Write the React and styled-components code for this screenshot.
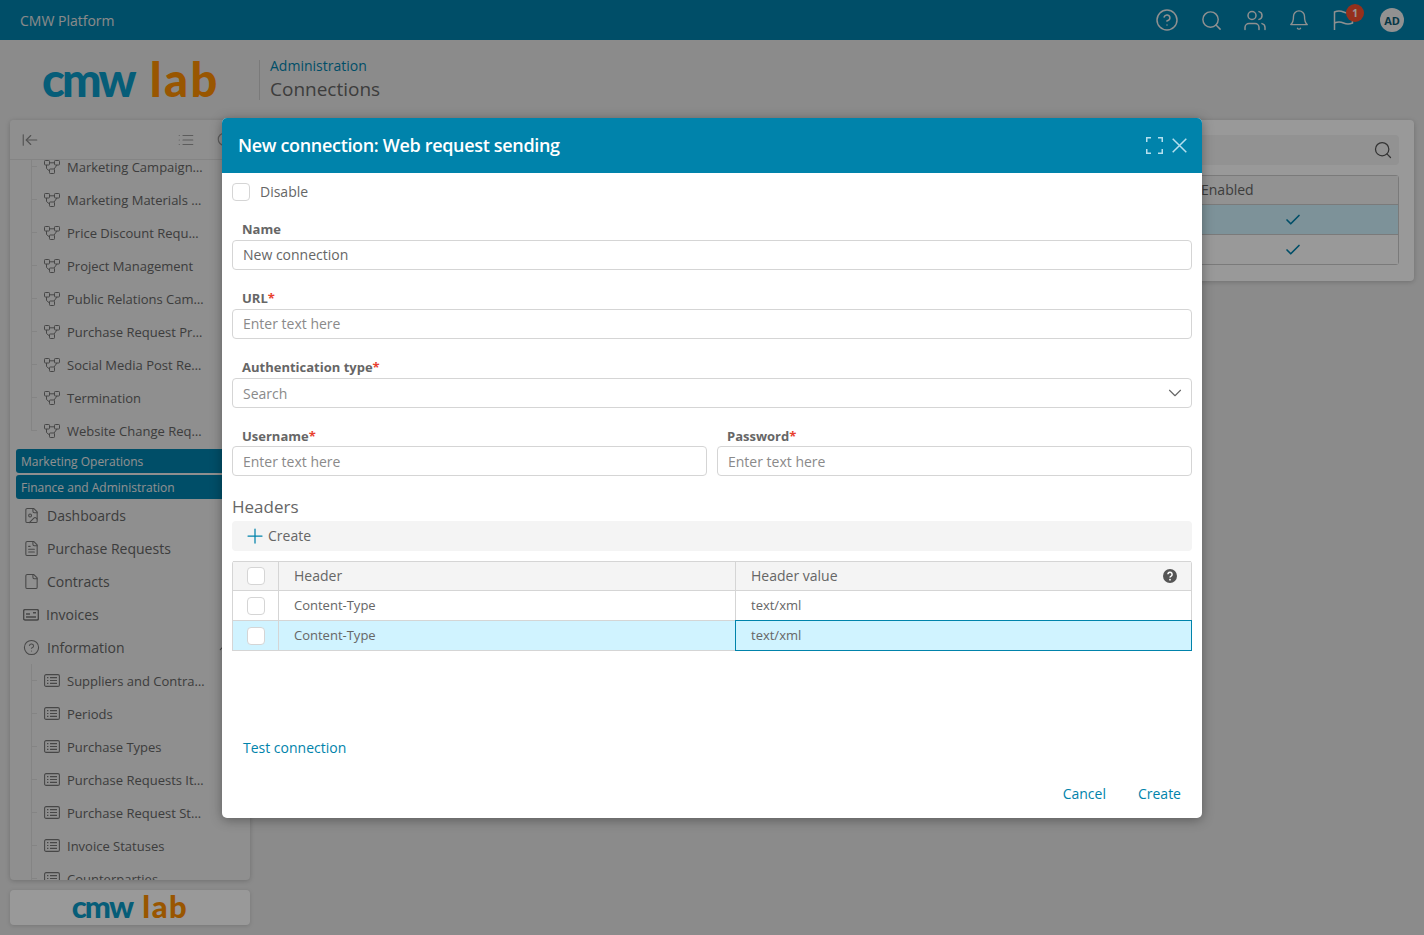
import React from 'react';
import styled, { createGlobalStyle } from 'styled-components';
import {
  LuCircleHelp, LuSearch, LuUsers, LuBell, LuCheck, LuChevronDown, LuChevronUp, LuPlus,
  LuFileImage, LuFileText, LuFile, LuList, LuArrowLeftToLine,
} from 'react-icons/lu';

const GlobalStyle = createGlobalStyle`
  html, body {
    margin: 0;
    height: 100%;
    overflow: hidden;
    font-family: "Open Sans", "Liberation Sans", sans-serif;
    color: #555;
  }
  * { box-sizing: border-box; }
`;

const Page = styled.div`
  position: relative;
  width: 1424px;
  height: 935px;
  overflow: hidden;
  background: #e8e8e8;
`;

const TopBar = styled.header`
  height: 40px;
  background: #0083ae;
  display: flex;
  align-items: center;
  justify-content: space-between;
  padding: 0 20px;
  color: #fff;
`;

const Brand = styled.div`
  font-size: 14px;
  color: #e6e6e6;
`;

const TopIcons = styled.div`
  display: flex;
  align-items: center;
  gap: 20px;
  color: #f0f0f0;
  font-size: 22px;

  svg {
    stroke-width: 1.5;
  }
`;

const IconSlot = styled.span`
  position: relative;
  width: 24px;
  height: 24px;
  display: flex;
  align-items: center;
  justify-content: center;
`;

const Badge = styled.span`
  position: absolute;
  top: -4px;
  right: -9px;
  width: 18px;
  height: 18px;
  border-radius: 50%;
  background: #f9502f;
  color: #fff;
  font-size: 10px;
  font-weight: 700;
  display: flex;
  align-items: center;
  justify-content: center;
`;

const Avatar = styled.span`
  width: 24px;
  height: 24px;
  margin-left: 5px;
  border-radius: 50%;
  background: #f2f2f2;
  color: #0a5a74;
  font-size: 11px;
  font-weight: 700;
  display: flex;
  align-items: center;
  justify-content: center;
`;

const PageHead = styled.div`
  height: 80px;
  display: flex;
  align-items: center;
  padding-left: 42px;
`;

const Logo = styled.div`
  display: flex;
  align-items: baseline;
  gap: ${p => (p.$small ? '10px' : '16px')};
  margin-top: -2px;
  font-family: Lato, "Open Sans", sans-serif;
  font-weight: 900;
  font-size: ${p => (p.$small ? '31px' : '47px')};
  line-height: 1;
  width: ${p => (p.$small ? 'auto' : '217px')};
`;

const LogoCmw = styled.span`
  color: #0a9cc8;
  letter-spacing: -0.06em;
`;

const LogoLab = styled.span`
  color: #ff9000;
  letter-spacing: 0.05em;
`;

const Crumbs = styled.div`
  border-left: 1px solid #ccc;
  height: 40px;
  padding-left: 10px;
  display: flex;
  flex-direction: column;
  justify-content: center;
`;

const CrumbParent = styled.div`
  font-size: 14px;
  line-height: 17px;
  margin-bottom: 1px;
  color: #0083ae;
`;

const CrumbTitle = styled.div`
  font-size: 19px;
  line-height: 28px;
  color: #666;
`;

const Content = styled.div`
  display: flex;
  gap: 10px;
  padding: 0 10px;
`;

const Side = styled.div`
  width: 240px;
  flex: none;
  display: flex;
  flex-direction: column;
  gap: 10px;
`;

const SidePanel = styled.nav`
  height: 760px;
  background: #eee;
  border-radius: 4px;
  overflow: hidden;
  isolation: isolate;
  box-shadow: 0 1px 5px rgba(0, 0, 0, 0.2);
  display: flex;
  flex-direction: column;
`;

const SideTools = styled.div`
  height: 40px;
  flex: none;
  display: flex;
  align-items: center;
  justify-content: space-between;
  padding: 0 16px 0 11px;
  border-bottom: 1px solid #ddd;
  color: #888;
  font-size: 18px;
  position: relative;
  z-index: 1;
  background: #eee;

  svg {
    stroke-width: 1.5;
  }
`;

const SideToolGroup = styled.div`
  display: flex;
  align-items: center;
  gap: 21px;
  color: #999;
`;

const SideList = styled.div`
  margin-top: -10px;
  padding: 0 6px;
`;

const TreeItem = styled.div`
  position: relative;
  height: 33px;
  display: flex;
  align-items: center;
  gap: 7px;
  padding-left: 28px;
  color: #666;
  font-size: 13px;
  white-space: nowrap;

  &::before {
    content: '';
    position: absolute;
    left: 15px;
    top: 0;
    bottom: ${p => (p.$last ? '16px' : '0')};
    width: 1px;
    background: #ddd;
  }

  &::after {
    content: '';
    position: absolute;
    left: 15px;
    top: 16px;
    width: 6px;
    height: 1px;
    background: #ddd;
  }

  svg {
    flex: none;
    color: #777;
  }
`;

const Sections = styled.div`
  display: flex;
  flex-direction: column;
  gap: 2px;
  margin-top: 2px;
`;

const SectionHead = styled.div`
  height: 24px;
  background: #0083ae;
  border-radius: 3px;
  color: #f0f0f0;
  font-size: 12px;
  display: flex;
  align-items: center;
  justify-content: space-between;
  padding: 0 11px 0 5px;

  svg {
    font-size: 14px;
  }
`;

const SideItem = styled.div`
  height: 33px;
  display: flex;
  align-items: center;
  gap: 7px;
  padding-left: 7px;
  color: #666;
  font-size: 14px;
  white-space: nowrap;

  svg {
    flex: none;
    font-size: 17px;
    color: #777;
    stroke-width: 1.5;
  }
`;

const ItemChevron = styled(LuChevronUp)`
  margin-left: auto;
  margin-right: 11px;
`;

const SideFoot = styled.div`
  height: 35px;
  background: #fff;
  border-radius: 4px;
  box-shadow: 0 1px 4px rgba(0, 0, 0, 0.15);
  display: flex;
  align-items: center;
  justify-content: center;
`;

const MainPanel = styled.section`
  flex: 1;
  min-width: 0;
  height: 161px;
  background: #fff;
  border-radius: 4px;
  box-shadow: 0 1px 5px rgba(0, 0, 0, 0.2);
  padding: 15px;
`;

const MainSearch = styled.div`
  height: 30px;
  background: #f4f4f4;
  border-radius: 4px;
  display: flex;
  align-items: center;
  justify-content: flex-end;
  padding-right: 6px;
  font-size: 20px;
  color: #555;

  svg {
    stroke-width: 1.5;
  }
`;

const MainTable = styled.div`
  margin-top: 10px;
  border: 1px solid #ccc;
  border-radius: 3px;
  font-size: 14px;
`;

const MainRow = styled.div`
  height: ${p => (p.$head ? '28px' : '30px')};
  display: flex;
  align-items: center;
  border-top: ${p => (p.$head ? 'none' : '1px solid #ccc')};
  background: ${p => (p.$active ? '#d0f3ff' : p.$head ? '#f4f4f4' : '#fff')};
`;

const EnabledCell = styled.div`
  margin-left: 925px;
  width: 184px;
  display: flex;
  justify-content: center;
  color: #0083ae;
  font-size: 18px;

  svg {
    stroke-width: 2.25;
  }
`;

const EnabledTitle = styled.div`
  margin: -2px 0 0 925px;
  color: #666;
`;

const Overlay = styled.div`
  position: absolute;
  inset: 0;
  background: rgba(0, 0, 0, 0.4);
`;

const Dialog = styled.div`
  position: absolute;
  left: 222px;
  top: 118px;
  width: 980px;
  height: 700px;
  background: #fff;
  border-radius: 5px;
  box-shadow: 0 2px 12px rgba(0, 0, 0, 0.35);
  display: flex;
  flex-direction: column;
  overflow: hidden;
`;

const DialogHead = styled.div`
  height: 55px;
  flex: none;
  background: #0083ab;
  display: flex;
  align-items: center;
  justify-content: space-between;
  padding: 0 15px 1px 16px;
  color: #fff;
`;

const DialogTitle = styled.div`
  font-size: 18px;
  font-weight: 600;
  letter-spacing: -0.33px;
`;

const DialogTools = styled.div`
  display: flex;
  align-items: center;
  gap: 9px;
  color: #b5dfee;

  svg {
    display: block;
  }
`;

const DialogBody = styled.div`
  flex: 1;
  display: flex;
  flex-direction: column;
  padding: 0 10px;
`;

const DisableRow = styled.label`
  height: 37px;
  margin-bottom: 8px;
  display: flex;
  align-items: center;
  gap: 10px;
  font-size: 14px;
  color: #666;
`;

const Box = styled.span`
  width: 18px;
  height: 18px;
  border: 1px solid #d5d5d5;
  border-radius: 4px;
  background: #fff;
  display: block;
  flex: none;
`;

const Field = styled.div`
  margin-bottom: 17px;
`;

const Label = styled.div`
  height: 22px;
  padding: 2px 0 0 10px;
  font-size: 13px;
  line-height: 18px;
  font-weight: 700;
  color: #666;

  b {
    color: #e8412f;
    font-weight: 700;
  }
`;

const FieldRow = styled.div`
  display: flex;
  gap: 10px;

  ${Field} {
    flex: 1;
  }

  ${Label} {
    height: 21px;
  }
`;

const Input = styled.div`
  height: 30px;
  border: 1px solid #d5d5d5;
  border-radius: 4px;
  display: flex;
  align-items: center;
  justify-content: space-between;
  padding: 0 10px ${p => (p.$raised ? '1px' : '0')};
  font-size: 14px;
  color: ${p => (p.$filled ? '#666' : '#8a8a8a')};

  svg {
    font-size: 22px;
    color: #666;
    stroke-width: 1.25;
    margin-right: -5px;
  }
`;

const SectionTitle = styled.div`
  font-size: 17px;
  line-height: 24px;
  margin-top: 2px;
  color: #666;
`;

const Toolbar = styled.div`
  height: 30px;
  margin-top: 2px;
  background: #f4f4f4;
  border-radius: 4px;
  display: flex;
  align-items: center;
  gap: 1px;
  padding: 0 0 1px 11px;
  font-size: 14px;
  color: #666;

  svg {
    font-size: 24px;
    color: #0083ab;
    stroke-width: 1.25;
  }
`;

const HeaderTable = styled.div`
  margin-top: 10px;
  border-left: 1px solid #d5d5d5;
  border-right: 1px solid #d5d5d5;
  border-radius: 3px 3px 0 0;
`;

const Row = styled.div`
  display: grid;
  grid-template-columns: 46px 457px 1fr;
  height: 30px;
  border-top: ${p => (p.$head ? '1px solid #d5d5d5' : 'none')};
  border-bottom: 1px solid #d5d5d5;
  font-size: ${p => (p.$head ? '14px' : '13px')};
  color: #666;
  background: ${p => (p.$active ? '#d0f3ff' : p.$head ? '#f4f4f4' : '#fff')};
`;

const Cell = styled.div`
  display: flex;
  align-items: center;
  justify-content: ${p => (p.$center ? 'center' : 'space-between')};
  padding: ${p => (p.$center ? '0' : '0 14px 1px 15px')};
  border-right: ${p => (p.$last ? 'none' : '1px solid #d5d5d5')};
  outline: ${p => (p.$focused ? '1px solid #0083ab' : 'none')};
`;

const Spacer = styled.div`
  flex: 1;
`;

const TextLink = styled.a`
  font-size: 14px;
  color: #0083ab;
`;

const TestLink = styled(TextLink)`
  padding-left: 11px;
`;

const Footer = styled.div`
  display: flex;
  justify-content: flex-end;
  gap: 32px;
  padding: 27px 11px 15px 0;
`;

const HelpDot = () => (
  <svg width="14" height="14" viewBox="0 0 14 14">
    <circle cx="7" cy="7" r="7" fill="#555" />
    <path d="M4.9 5.3a2.1 2.1 0 1 1 3.2 1.8c-.7.4-1.1.8-1.1 1.4" fill="none" stroke="#fff" strokeWidth="1.5" />
    <circle cx="7" cy="10.7" r="0.9" fill="#fff" />
  </svg>
);

const ExpandIcon = () => (
  <svg width="17" height="17" viewBox="0 0 17 17" fill="none" stroke="currentColor" strokeWidth="1.5">
    <path d="M.75 5V.75H5M12 .75h4.25V5M16.25 12v4.25H12M5 16.25H.75V12" />
  </svg>
);

const CloseIcon = () => (
  <svg width="15" height="15" viewBox="0 0 15 15" fill="none" stroke="currentColor" strokeWidth="1.5">
    <path d="M.7.7l13.6 13.6M14.3.7L.7 14.3" />
  </svg>
);

const FlagIcon = () => (
  <svg width="21" height="22" viewBox="0 0 21 22" fill="none" stroke="currentColor" strokeWidth="1.3">
    <path d="M1.5 21V3c3-1.4 6-1.4 9 0s6 1.4 9 0v11c-3 1.4-6 1.4-9 0s-6-1.4-9 0" />
  </svg>
);

const FlowIcon = () => (
  <svg width="16" height="14" viewBox="0 0 16 14" fill="none" stroke="currentColor" strokeWidth="1">
    <rect x="0.5" y="0.5" width="5" height="4.5" rx="0.8" />
    <rect x="10.5" y="0.5" width="5" height="4.5" rx="0.8" />
    <rect x="5.5" y="9" width="5" height="4.5" rx="0.8" />
    <path d="M5.5 2.8h5M2.5 5v3.5l3 2.5M13 5l-3 4" />
  </svg>
);

const ListBoxIcon = () => (
  <svg width="16" height="13" viewBox="0 0 16 13" fill="none" stroke="currentColor" strokeWidth="1.1">
    <rect x="0.6" y="0.6" width="14.8" height="11.8" rx="1.5" />
    <path d="M6 3.6h7M6 6.5h7M6 9.4h7M3 3.6h1.4M3 6.5h1.4M3 9.4h1.4" />
  </svg>
);

const CardIcon = () => (
  <svg width="16" height="12" viewBox="0 0 16 12" fill="none" stroke="currentColor" strokeWidth="1.2">
    <rect x="0.6" y="0.6" width="14.8" height="10.4" rx="1.5" />
    <path d="M3 5h4M3 8h10M10 3.8h3" />
  </svg>
);

const flowItems = [
  'Marketing Campaign…',
  'Marketing Materials …',
  'Price Discount Requ…',
  'Project Management',
  'Public Relations Cam…',
  'Purchase Request Pr…',
  'Social Media Post Re…',
  'Termination',
  'Website Change Req…',
];

const listItems = [
  'Suppliers and Contra…',
  'Periods',
  'Purchase Types',
  'Purchase Requests It…',
  'Purchase Request St…',
  'Invoice Statuses',
  'Counterparties',
];

const navItems = [
  { icon: LuFileImage, label: 'Dashboards' },
  { icon: LuFileText, label: 'Purchase Requests' },
  { icon: LuFile, label: 'Contracts' },
  { icon: CardIcon, label: 'Invoices' },
  { icon: LuCircleHelp, label: 'Information', open: true },
];

const headerRows = [{ id: 1 }, { id: 2, active: true }];

export default function App() {
  return (
    <Page>
      <GlobalStyle />
      <TopBar>
        <Brand>CMW Platform</Brand>
        <TopIcons>
          <IconSlot><LuCircleHelp size={24} /></IconSlot>
          <IconSlot><LuSearch size={23} /></IconSlot>
          <IconSlot><LuUsers size={25} /></IconSlot>
          <IconSlot><LuBell /></IconSlot>
          <IconSlot>
            <FlagIcon />
            <Badge>1</Badge>
          </IconSlot>
          <Avatar>AD</Avatar>
        </TopIcons>
      </TopBar>
      <PageHead>
        <Logo>
          <LogoCmw>cmw</LogoCmw>
          <LogoLab>lab</LogoLab>
        </Logo>
        <Crumbs>
          <CrumbParent>Administration</CrumbParent>
          <CrumbTitle>Connections</CrumbTitle>
        </Crumbs>
      </PageHead>
      <Content>
        <Side>
          <SidePanel>
            <SideTools>
              <LuArrowLeftToLine />
              <SideToolGroup>
                <LuList />
                <LuSearch />
              </SideToolGroup>
            </SideTools>
            <SideList>
              {flowItems.map((name, i) => (
                <TreeItem key={name} $last={i === flowItems.length - 1}>
                  <FlowIcon />
                  {name}
                </TreeItem>
              ))}
              <Sections>
                <SectionHead>Marketing Operations <LuChevronDown /></SectionHead>
                <SectionHead>Finance and Administration <LuChevronUp /></SectionHead>
              </Sections>
              {navItems.map(({ icon: Icon, label, open }) => (
                <SideItem key={label}>
                  <Icon />
                  {label}
                  {open && <ItemChevron />}
                </SideItem>
              ))}
              {listItems.map(name => (
                <TreeItem key={name}>
                  <ListBoxIcon />
                  {name}
                </TreeItem>
              ))}
            </SideList>
          </SidePanel>
          <SideFoot>
            <Logo $small>
              <LogoCmw>cmw</LogoCmw>
              <LogoLab>lab</LogoLab>
            </Logo>
          </SideFoot>
        </Side>
        <MainPanel>
          <MainSearch><LuSearch /></MainSearch>
          <MainTable>
            <MainRow $head><EnabledTitle>Enabled</EnabledTitle></MainRow>
            <MainRow $active><EnabledCell><LuCheck /></EnabledCell></MainRow>
            <MainRow><EnabledCell><LuCheck /></EnabledCell></MainRow>
          </MainTable>
        </MainPanel>
      </Content>

      <Overlay />
      <Dialog>
        <DialogHead>
          <DialogTitle>New connection: Web request sending</DialogTitle>
          <DialogTools>
            <ExpandIcon />
            <CloseIcon />
          </DialogTools>
        </DialogHead>
        <DialogBody>
          <DisableRow><Box />Disable</DisableRow>
          <Field>
            <Label>Name</Label>
            <Input $filled $raised>New connection</Input>
          </Field>
          <Field>
            <Label>URL<b>*</b></Label>
            <Input $raised>Enter text here</Input>
          </Field>
          <Field>
            <Label>Authentication type<b>*</b></Label>
            <Input>Search <LuChevronDown /></Input>
          </Field>
          <FieldRow>
            <Field>
              <Label>Username<b>*</b></Label>
              <Input>Enter text here</Input>
            </Field>
            <Field>
              <Label>Password<b>*</b></Label>
              <Input>Enter text here</Input>
            </Field>
          </FieldRow>
          <SectionTitle>Headers</SectionTitle>
          <Toolbar><LuPlus />Create</Toolbar>
          <HeaderTable>
            <Row $head>
              <Cell $center><Box /></Cell>
              <Cell>Header</Cell>
              <Cell $last>Header value <HelpDot /></Cell>
            </Row>
            {headerRows.map(row => (
              <Row key={row.id} $active={row.active}>
                <Cell $center><Box /></Cell>
                <Cell>Content-Type</Cell>
                <Cell $last $focused={row.active}>text/xml</Cell>
              </Row>
            ))}
          </HeaderTable>
          <Spacer />
          <TestLink>Test connection</TestLink>
          <Footer>
            <TextLink>Cancel</TextLink>
            <TextLink>Create</TextLink>
          </Footer>
        </DialogBody>
      </Dialog>
    </Page>
  );
}
